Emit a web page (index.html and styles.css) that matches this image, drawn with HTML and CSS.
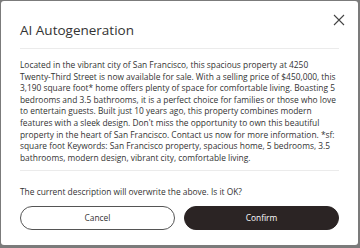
FILE: index.html
```html
<!DOCTYPE html>
<html lang="en">
<head>
    <meta charset="UTF-8">
    <meta name="viewport" content="width=device-width, initial-scale=1.0">
    <title>AI Autogeneration</title>
    <link rel="stylesheet" href="styles.css">
</head>
<body>
    <div class="dialog">
        <div class="header">
            <h1>AI Autogeneration</h1>
            <button class="close" aria-label="Close">
                <svg width="12" height="12" viewBox="0 0 12 12"><path d="M1 1L11 11M11 1L1 11" stroke="#444" stroke-width="1.1" fill="none"/></svg>
            </button>
        </div>
        <p class="desc">Located in the vibrant city of San Francisco, this spacious property at 4250 Twenty-Third Street is now available for sale. With a selling price of $450,000, this 3,190 square foot* home offers plenty of space for comfortable living. Boasting 5 bedrooms and 3.5 bathrooms, it is a perfect choice for families or those who love to entertain guests. Built just 10 years ago, this property combines modern features with a sleek design. Don't miss the opportunity to own this beautiful property in the heart of San Francisco. Contact us now for more information. *sf: square foot Keywords: San Francisco property, spacious home, 5 bedrooms, 3.5 bathrooms, modern design, vibrant city, comfortable living.</p>
        <p class="question">The current description will overwrite the above. Is it OK?</p>
        <div class="actions">
            <button class="btn cancel">Cancel</button>
            <button class="btn confirm">Confirm</button>
        </div>
    </div>
</body>
</html>
```

FILE: styles.css
```css
html, body {
    margin: 0;
    height: 100%;
}
body {
    background-color: #7b7b7b;
    font-family: "Open Sans", "Noto Sans", sans-serif;
    color: #333;
    padding: 1px 2px 2px 1px;
    box-sizing: border-box;
}
.dialog {
    background: #fff;
    border-radius: 3px;
    height: 244px;
    padding: 0 19px;
    box-sizing: border-box;
}
.header {
    display: flex;
    justify-content: space-between;
    align-items: flex-start;
    border-bottom: 1px solid #ebebeb;
    height: 47px;
}
h1 {
    margin: 0;
    padding-top: 21px;
    font-size: 13.5px;
    font-weight: 400;
    color: #333;
    line-height: 16px;
}
.close {
    background: none;
    border: none;
    padding: 0;
    margin: 13px -6px 0 0;
    width: 12px;
    height: 12px;
    display: flex;
}
.desc {
    margin: 0;
    padding: 10px 0 7px;
    font-size: 8.4px;
    line-height: 11.6px;
    border-bottom: 1px solid #ebebeb;
}
.question {
    margin: 0;
    padding: 15px 0 0;
    font-size: 8.4px;
    line-height: 11.6px;
}
.actions {
    display: flex;
    gap: 9px;
    margin-top: 8px;
}
.btn {
    flex: 1;
    height: 24px;
    border-radius: 12px;
    font-family: inherit;
    font-size: 8.4px;
    padding: 0;
}
.cancel {
    background: #fff;
    border: 1px solid #555;
    color: #333;
}
.confirm {
    background: #2b2424;
    border: 1px solid #2b2424;
    color: #fff;
}
```
